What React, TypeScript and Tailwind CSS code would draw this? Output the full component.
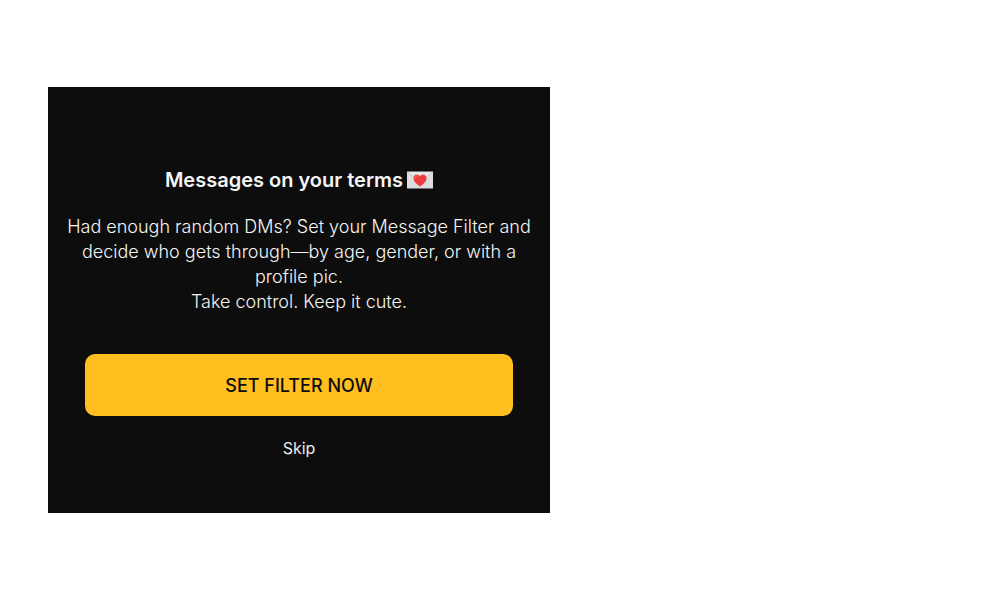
export default function App() {
  return (
    <main className="flex min-h-screen items-center bg-white px-12 font-['Inter',sans-serif]">
      <section
        aria-labelledby="filter-title"
        className="flex w-full max-w-[502px] flex-col items-center bg-[#0d0d0d] px-4 pt-20 pb-[53px] text-center text-white"
      >
        <h1 id="filter-title" className="flex items-center gap-1 text-[20px] leading-[26px] font-semibold text-[#f5f5f5]">
          Messages on your terms
          <svg viewBox="0 0 26 18" className="h-[18px] w-[26px]" role="img" aria-label="love letter">
            <rect y="0.5" width="26" height="17" rx="0.5" fill="#dededf" />
            <path d="M1 17 10 9M25 17 16 9" fill="none" stroke="#cfcfd1" strokeWidth="0.7" />
            <path d="M0.5 1 11 10q2 1.5 4 0L25.500 1" fill="#e8e8e9" stroke="#bdbdc0" strokeWidth="0.7" />
            <path d="M13 15.500C9 12.600 6.500 10.400 6.500 7.200c0-4.300 5-4.800 6.500-1.700 1.500-3.100 6.500-2.600 6.500 1.700 0 3.200-2.500 5.400-6.500 8.300Z" fill="#ed3d3d" />
            <path d="M8.200 7c0-1.500 1-2.200 2.200-2" fill="none" stroke="#ff7770" strokeWidth="1" strokeLinecap="round" />
          </svg>
        </h1>
        <p className="mt-[21px] text-[18px] leading-[25px] font-light text-[#f5f5f5]">
          Had enough random DMs? Set your Message Filter and decide who gets through—by age, gender, or with a profile pic.
          <br />
          Take control. Keep it cute.
        </p>
        <div className="mt-10 w-full px-[21px]">
          <button type="button" className="h-[62px] w-full rounded-[10px] bg-[#ffbf1f] text-[18px] font-medium text-[#0d0d0d]">
            SET FILTER NOW
          </button>
        </div>
        <button type="button" className="mt-5 text-[16px] leading-6 text-[#ebebeb]">
          Skip
        </button>
      </section>
    </main>
  );
}
